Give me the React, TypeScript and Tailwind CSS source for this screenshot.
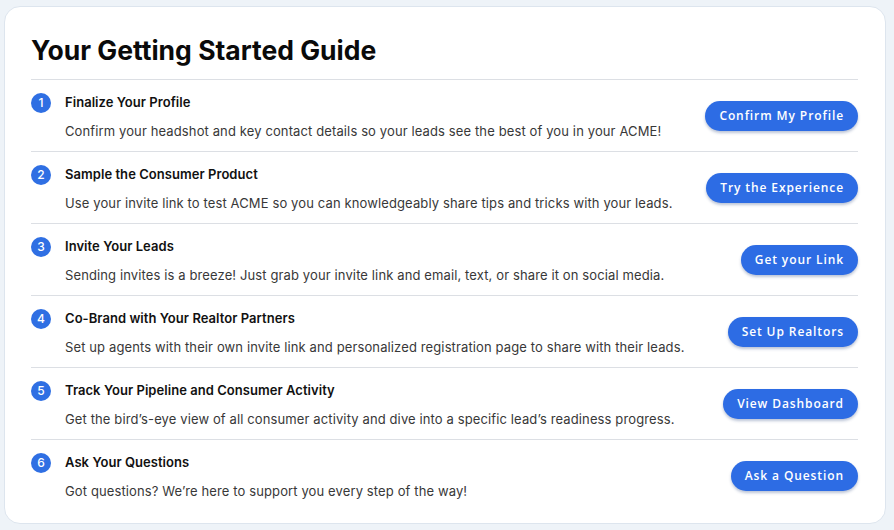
const steps = [
  {
    title: "Finalize Your Profile",
    text: "Confirm your headshot and key contact details so your leads see the best of you in your ACME!",
    cta: "Confirm My Profile",
  },
  {
    title: "Sample the Consumer Product",
    text: "Use your invite link to test ACME so you can knowledgeably share tips and tricks with your leads.",
    cta: "Try the Experience",
  },
  {
    title: "Invite Your Leads",
    text: "Sending invites is a breeze! Just grab your invite link and email, text, or share it on social media.",
    cta: "Get your Link",
  },
  {
    title: "Co-Brand with Your Realtor Partners",
    text: "Set up agents with their own invite link and personalized registration page to share with their leads.",
    cta: "Set Up Realtors",
  },
  {
    title: "Track Your Pipeline and Consumer Activity",
    text: "Get the bird\u2019s-eye view of all consumer activity and dive into a specific lead\u2019s readiness progress.",
    cta: "View Dashboard",
  },
  {
    title: "Ask Your Questions",
    text: "Got questions? We\u2019re here to support you every step of the way!",
    cta: "Ask a Question",
  },
];

function StepRow({ n, title, text, cta }: { n: number; title: string; text: string; cta: string }) {
  return (
    <li className="flex h-[72px] items-center justify-between border-t border-[#dcdfe4]">
      <div className="flex flex-col pt-[2px]">
        <div className="flex h-[18px] items-center gap-[14px]">
          <span className="flex h-[20px] w-[20px] items-center justify-center rounded-full bg-[#2f6fe3] text-[12px] font-medium leading-none text-white">
            {n}
          </span>
          <span className="text-[13px] font-semibold tracking-[0.05px] text-[#111]">{title}</span>
        </div>
        <p className="mt-[10px] h-[18px] pl-[34px] text-[13px] leading-[18px] tracking-[0.12px] text-[#383838]">
          {text}
        </p>
      </div>
      <button className="h-[30px] rounded-full bg-[#2d6ce4] px-[14px] text-[12px] font-semibold tracking-[0.075em] text-white shadow-[0_2px_3px_rgba(30,60,120,0.3)] [font-family:'Open_Sans',sans-serif]">
        {cta}
      </button>
    </li>
  );
}

export default function App() {
  return (
    <div className="min-h-[530px] bg-[#eef3f8] pl-[4px] pr-[8px] pt-[6px] pb-[8px] [font-family:Inter,'Liberation_Sans',sans-serif]">
      <div className="rounded-[16px] border border-[#dde5ee] bg-white pl-[26px] pr-[27px] pb-[12px]">
        <h1 className="pt-[27px] pb-[13px] text-[26.5px] font-bold leading-[32px] text-[#0a0a0a]">
          Your Getting Started Guide
        </h1>
        <ol>
          {steps.map((s, i) => (
            <StepRow key={s.cta} n={i + 1} {...s} />
          ))}
        </ol>
      </div>
    </div>
  );
}
